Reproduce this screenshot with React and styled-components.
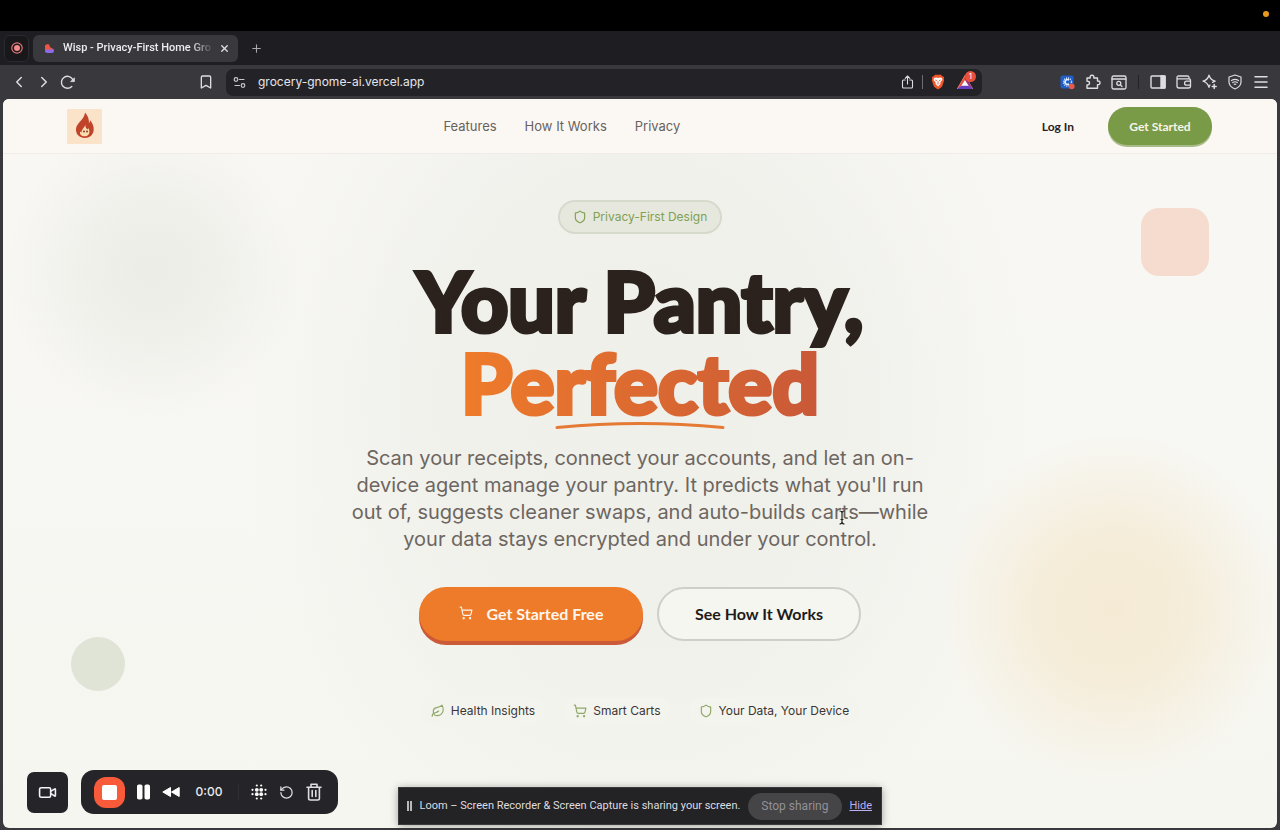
import React from "react";
import styled, { createGlobalStyle, css } from "styled-components";
import {
  ChevronLeft, ChevronRight, Bookmark, Plus, X, Shield, ShoppingCart, Leaf,
  Menu, Video, RotateCcw,
} from "lucide-react";

const display = '"Lato", "Liberation Sans", sans-serif';
const ui = '"Inter", "Liberation Sans", sans-serif';
const chrome = '"Roboto", "Liberation Sans", sans-serif';

const GlobalStyle = createGlobalStyle`
  *, *::before, *::after { box-sizing: border-box; }
  body { margin: 0; background: #39383d; font-family: ${ui}; }
  button, input { font: inherit; color: inherit; }
  svg { display: block; flex: none; }
`;

const Desktop = styled.div`
  position: relative;
  display: flex;
  flex-direction: column;
  min-height: 100vh;
  background: #39383d;
`;

const MenuBar = styled.div`
  display: flex;
  align-items: center;
  justify-content: flex-end;
  height: 31px;
  padding: 0 11px 4px;
  background: #000;
`;

const MicDot = styled.span`
  width: 6px;
  height: 6px;
  border-radius: 50%;
  background: #e89a1c;
`;

const TabStrip = styled.div`
  display: flex;
  align-items: center;
  height: 34px;
  padding: 0 4px;
  gap: 4px;
  background: #1e1d21;
`;

const PlainButton = styled.button`
  display: flex;
  align-items: center;
  justify-content: center;
  padding: 0;
  border: 0;
  background: none;
  color: #dedde2;
  cursor: pointer;
`;

const PinnedTab = styled(PlainButton)`
  width: 25px;
  height: 27px;
  border: 1px solid #2b2a2f;
  border-radius: 6px;
  background: #18171a;
`;

const Tab = styled.div`
  display: flex;
  align-items: center;
  width: 205px;
  height: 27px;
  padding: 0 8px 0 11px;
  gap: 8px;
  border-radius: 6px;
  background: #39383d;
`;

const TabTitle = styled.span`
  flex: 1;
  white-space: nowrap;
  font-family: ${chrome};
  font-size: 11px;
  font-weight: 500;
  line-height: 16px;
  color: #ececf0;
  mask-image: linear-gradient(90deg, #000 86%, transparent 102%);
`;

const NewTab = styled(PlainButton)`
  width: 28px;
  height: 27px;
  color: #a9a8ae;
`;

const Toolbar = styled.div`
  display: flex;
  align-items: center;
  height: 34px;
  padding: 0 10px;
  background: #39383d;
`;

const ToolGroup = styled.div`
  display: flex;
  align-items: center;
  gap: ${(p) => p.$gap}px;
`;

const NavTools = styled(ToolGroup)`
  width: 188px;
`;

const AddressBar = styled.div`
  display: flex;
  align-items: center;
  flex: 1;
  height: 27px;
  margin: 0 78px 0 12px;
  padding: 0 9px 0 7px;
  gap: 12px;
  border-radius: 7px;
  background: #232227;
  color: #c9c8ce;
`;

const UrlInput = styled.input`
  flex: 1;
  min-width: 0;
  padding: 0;
  border: 0;
  outline: 0;
  background: none;
  font-size: 12px;
  line-height: 16px;
  color: #e6e5ea;
`;

const Divider = styled.span`
  width: 1px;
  height: ${(p) => p.$size || 14}px;
  margin: 0 ${(p) => p.$space || 0}px;
  background: ${(p) => p.$tone || "#6d6c72"};
`;

const BadgeHost = styled.span`
  position: relative;
  display: flex;
`;

const CountBadge = styled.span`
  position: absolute;
  top: -4px;
  right: -3px;
  width: 11px;
  height: 11px;
  border-radius: 50%;
  background: #e9503b;
  color: #fff;
  font-size: 8px;
  line-height: 11px;
  text-align: center;
`;

const Page = styled.div`
  position: relative;
  display: flex;
  flex: 1;
  flex-direction: column;
  margin: 0 3px 2px;
  overflow: hidden;
  border-radius: 6px;
  background:
    radial-gradient(circle at 150px 172px, rgba(231, 232, 225, 0.7) 0, rgba(234, 235, 228, 0.6) 60px, rgba(243, 243, 238, 0) 150px),
    radial-gradient(circle at calc(100% - 164px) 510px, rgba(245, 234, 211, 0.95) 0, rgba(245, 235, 213, 0.85) 70px, rgba(247, 241, 226, 0) 175px),
    radial-gradient(ellipse 400px 480px at 50% 300px, #f0f0eb 0, #f1f1ec 50%, rgba(246, 246, 241, 0) 100%),
    linear-gradient(180deg, #f8f7f4 0, #f7f7f3 50%, #f6f6f0 100%);
`;

const SiteHeader = styled.header`
  display: flex;
  align-items: center;
  justify-content: space-between;
  height: 55px;
  padding: 0 65px 0 64px;
  border-bottom: 1px solid #f0ede9;
  background: #fbf8f4;
`;

const SiteNav = styled.nav`
  display: flex;
  gap: 28px;
`;

const NavLink = styled.a`
  font-size: 13px;
  line-height: 20px;
  color: #68625d;
  text-decoration: none;
`;

const Account = styled.div`
  display: flex;
  align-items: center;
  gap: 14px;
`;

const PillButton = styled.button`
  display: flex;
  align-items: center;
  justify-content: center;
  border: 0;
  font-family: ${display};
  font-weight: 700;
  cursor: pointer;
  ${(p) => p.$kind === "text" && css`
    padding: 8px 20px;
    background: none;
    color: #29221e;
    font-size: 12px;
  `}
  ${(p) => p.$kind === "green" && css`
    width: 104px;
    height: 38px;
    padding: 0;
    border-radius: 19px;
    background: #799b47;
    box-shadow: 0 2px 0 #a9bb88;
    color: #f8f5e9;
    font-size: 12px;
  `}
  ${(p) => p.$kind === "orange" && css`
    width: 224px;
    height: 54px;
    padding: 0 0 2px;
    gap: 14px;
    border-radius: 27px;
    background: #ed7b29;
    box-shadow: 0 4px 0 #cb5a38;
    color: #fdf6ec;
    font-size: 16px;
  `}
  ${(p) => p.$kind === "outline" && css`
    width: 204px;
    height: 54px;
    padding: 0 0 2px;
    border: 2px solid #cfcfca;
    border-radius: 27px;
    background: #f6f6f1;
    color: #1f1b19;
    font-size: 16px;
  `}
`;

const Hero = styled.main`
  display: flex;
  flex-direction: column;
  align-items: center;
  padding: 46px 24px 100px;
`;

const PrivacyBadge = styled.div`
  display: flex;
  align-items: center;
  height: 34px;
  padding: 0 13px;
  gap: 6px;
  border: 2px solid #d6dacd;
  border-radius: 17px;
  background: #e6e8de;
  color: #80a052;
  font-size: 12px;
  line-height: 16px;
`;

const Headline = styled.h1`
  position: relative;
  margin: 25px 0 0;
  font-family: ${display};
  font-size: 82px;
  font-weight: 900;
  line-height: 82px;
  text-align: center;
  color: #2b221e;
  -webkit-text-stroke: 4px #2b221e;
`;

const Accent = styled.span`
  display: block;
  width: max-content;
  margin: 0 auto;
  background: linear-gradient(90deg, #ef7b2a, #c95938);
  background-clip: text;
  color: transparent;
  -webkit-text-stroke: 4px transparent;
`;

const Swoosh = styled.svg`
  position: absolute;
  left: 50%;
  bottom: -8px;
  transform: translateX(-50%);
`;

const Lead = styled.p`
  max-width: 580px;
  margin: 22px 0 0;
  font-size: 20px;
  line-height: 27px;
  text-align: center;
  color: #6d6660;
`;

const Actions = styled.div`
  display: flex;
  flex-wrap: wrap;
  justify-content: center;
  gap: 14px;
  margin-top: 34px;
`;

const Chips = styled.ul`
  display: flex;
  flex-wrap: wrap;
  justify-content: center;
  gap: 18px;
  margin: 56px 0 0;
  padding: 0;
  list-style: none;
`;

const Chip = styled.li`
  display: flex;
  align-items: center;
  height: 28px;
  padding: 0 10px;
  gap: 6px;
  border-radius: 14px;
  background: #f4f4ef;
  color: #3b3633;
  font-size: 12px;
  line-height: 16px;
`;

const Floater = styled.span`
  position: absolute;
  ${(p) => p.$shape === "square" ? css`
    top: 109px;
    right: 68px;
    width: 68px;
    height: 68px;
    border-radius: 18px;
    background: #f6dccf;
  ` : css`
    top: 538px;
    left: 68px;
    width: 54px;
    height: 54px;
    border-radius: 50%;
    background: #e0e4d6;
  `}
`;

const TextCursor = styled.svg`
  position: absolute;
  top: 411px;
  left: calc(50% + 198px);
`;

const RecorderDock = styled.div`
  position: absolute;
  bottom: 16px;
  left: 27px;
  display: flex;
  align-items: center;
  gap: 13px;
  color: #fff;
`;

const CameraButton = styled(PlainButton)`
  width: 41px;
  height: 41px;
  border-radius: 7px;
  background: #252428;
  color: #f4f4f6;
`;

const Recorder = styled.div`
  display: flex;
  align-items: center;
  height: 44px;
  padding: 0 16px 0 13px;
  border-radius: 13px;
  background: #252428;
  gap: 12px;
`;

const StopButton = styled(PlainButton)`
  width: 31px;
  height: 31px;
  border-radius: 12px;
  background: #f95a3a;
`;

const StopMark = styled.span`
  width: 15px;
  height: 15px;
  border-radius: 2px;
  background: #fff;
`;

const Timer = styled.span`
  width: 34px;
  font-size: 12px;
  font-weight: 500;
  line-height: 16px;
  text-align: center;
  color: #ececee;
`;

const ShareBar = styled.div`
  position: absolute;
  bottom: 5px;
  left: 50%;
  display: flex;
  align-items: center;
  justify-content: space-between;
  width: 484px;
  height: 38px;
  padding: 0 9px 0 8px;
  transform: translateX(-50%);
  border: 1px solid #3a393c;
  background: #232224;
  box-shadow: 0 1px 8px rgba(0, 0, 0, 0.35);
  color: #dddde0;
  font-family: ${chrome};
  font-size: 11px;
  line-height: 16px;
  white-space: nowrap;
`;

const ShareMark = styled.span`
  width: 5px;
  height: 10px;
  border: solid #b9b9bd;
  border-width: 0 2px;
`;

const StopSharing = styled.button`
  width: 94px;
  height: 27px;
  padding: 0;
  border: 0;
  border-radius: 14px;
  background: #454447;
  color: #929196;
  font-size: 12px;
`;

const HideLink = styled.a`
  color: #bcaef0;
  text-decoration: underline;
`;

const line = { fill: "none", stroke: "currentColor", strokeLinecap: "round", strokeLinejoin: "round" };

const RecordIcon = () => (
  <svg width="12" height="12" viewBox="0 0 12 12">
    <circle cx="6" cy="6" r="5.2" fill="none" stroke="#df7479" strokeWidth="1.2" />
    <circle cx="6" cy="6" r="3" fill="#f28b8c" />
  </svg>
);

const FaviconIcon = () => (
  <svg width="11" height="11" viewBox="0 0 11 11">
    <path d="M1 5.5 H8 Q10 5.5 10 7.8 Q10 10 8 10 H3 Q1 10 1 8Z" fill="#8b6be8" />
    <path d="M1 2.5 Q2 1 4 1 Q5.5 1 6 4 L9.5 6.5 H1Z" fill="#ef5540" />
  </svg>
);

const ReloadIcon = () => (
  <svg width="16" height="16" viewBox="0 0 16 16" {...line} strokeWidth="1.4">
    <path d="M11.8 12.4 A6 6 0 1 1 13 6" />
    <path d="M14.4 4.2 V7.6 H11Z" fill="currentColor" strokeWidth=".8" />
  </svg>
);

const TuneIcon = () => (
  <svg width="13" height="13" viewBox="0 0 13 13" {...line} strokeWidth="1.2">
    <circle cx="3" cy="3.5" r="1.8" /><path d="M6.5 3.5 H11" />
    <circle cx="10" cy="9.5" r="1.8" /><path d="M2 9.5 H6.5" />
  </svg>
);

const ShareIcon = () => (
  <svg width="13" height="14" viewBox="0 0 13 14" {...line} strokeWidth="1.1">
    <path d="M4.2 5 H2.5 Q1.5 5 1.5 6 V12 Q1.5 13 2.5 13 H10.5 Q11.5 13 11.5 12 V6 Q11.5 5 10.5 5 H8.8" />
    <path d="M6.5 9 V1.2 M4.2 3.3 L6.5 1 L8.8 3.3" />
  </svg>
);

const LionIcon = () => (
  <svg width="14" height="16" viewBox="0 0 14 16">
    <path d="M4 .8 H10 L11.3 2.2 L13.2 3 L12.8 5 L13.2 6.3 L11.3 12 Q10.5 13.5 7 15.5 Q3.5 13.5 2.7 12 L.8 6.3 L1.2 5 L.8 3 L2.7 2.2Z" fill="#f1562b" />
    <path d="M3 4 L5.5 3.6 L7 4 L8.5 3.6 L11 4 L11.4 6 L9.3 8.4 L9.5 10 L7 12.5 L4.5 10 L4.7 8.4 L2.6 6Z" fill="#fff" />
    <path d="M4.2 6 L6 6.6 M9.8 6 L8 6.6 M7 7 V9 M5.8 9.4 L7 10.2 L8.2 9.4" stroke="#f1562b" strokeWidth=".8" fill="none" />
  </svg>
);

const TriangleIcon = () => (
  <svg width="16" height="14" viewBox="0 0 16 14">
    <path d="M8 0 L16 14 H0Z" fill="#fff" />
    <path d="M8 0 V5 L4.2 11 L0 14Z" fill="#f0503a" />
    <path d="M8 0 L16 14 L11.8 11 L8 5Z" fill="#9b2f7c" />
    <path d="M0 14 L4.2 10.7 H11.8 L16 14Z" fill="#6a3cc0" />
  </svg>
);

const ExtensionIcon = () => (
  <svg width="15" height="15" viewBox="0 0 15 15">
    <rect x=".5" y=".5" width="13" height="13" rx="2" fill="#1e5fcc" />
    <circle cx="7.5" cy="7" r="4" fill="none" stroke="#e7f0ff" strokeWidth="1.4" strokeDasharray="1 1.1" />
    <path d="M9 5.2 A2.4 2.4 0 1 0 9 8.8" fill="none" stroke="#e7f0ff" strokeWidth="1.6" />
    <circle cx="11.7" cy="11.3" r="2.9" fill="#e8594a" />
  </svg>
);

const PuzzleIcon = () => (
  <svg width="16" height="16" viewBox="0 0 16 16" {...line} strokeWidth="1.4">
    <path d="M2 4 H5.2 C4.8 2.2 5.6 1.2 7 1.2 C8.400 1.2 9.2 2.2 8.8 4 H12.500 V7 C14.200 6.700 15 7.600 15 8.800 C15 10 14.200 10.900 12.500 10.600 V14.300 H2 V11 C3.700 11.200 4.500 10.300 4.500 9.100 C4.500 7.900 3.700 7 2 7.200Z" />
  </svg>
);

const TabSearchIcon = () => (
  <svg width="16" height="15" viewBox="0 0 16 15" {...line} strokeWidth="1.3">
    <rect x="1" y="1" width="14" height="13" rx="1.5" /><path d="M1 4 H15" />
    <circle cx="7.8" cy="8.3" r="2" /><path d="M9.4 9.9 L11 11.5" />
  </svg>
);

const SidePanelIcon = () => (
  <svg width="16" height="14" viewBox="0 0 16 14" {...line} strokeWidth="1.4">
    <rect x="1" y="1" width="14" height="12" rx="1" /><path d="M11 1 H15 V13 H11Z" fill="currentColor" />
  </svg>
);

const WalletIcon = () => (
  <svg width="16" height="14" viewBox="0 0 16 14" {...line} strokeWidth="1.3">
    <path d="M13 3.500 V2.500 Q13 1 11.500 1 H2.500 Q1 1 1 2.500 V11 Q1 13 3 13 H12.500 Q14.500 13 14.500 11 V5.500 Q14.500 3.800 13 3.800 H1.500" />
    <path d="M14.500 6.200 H10.500 Q8.600 6.200 8.600 8.200 Q8.600 10.200 10.500 10.200 H14.500" />
  </svg>
);

const SparkIcon = () => (
  <svg width="16" height="16" viewBox="0 0 16 16" {...line} strokeWidth="1.3">
    <path d="M10.600 8.400 Q12 7.600 13.200 7.200 Q8.600 6 7 1.200 Q5.600 6 1 7.200 Q5.600 8.600 7 13.400 Q7.300 12 8 11" />
    <path d="M12.2 10.500 V14.500 M10.200 12.500 H14.200" strokeWidth="1.500" />
  </svg>
);

const VpnIcon = () => (
  <svg width="14" height="16" viewBox="0 0 14 16" {...line} strokeWidth="1.2">
    <path d="M7 1 L13 3 V8 Q13 12.500 7 15 Q1 12.500 1 8 V3Z" />
    <path d="M3.500 6.500 Q7 4.300 10.500 6.500 M4.700 8.500 Q7 7 9.300 8.500 M6.200 10.300 Q7 9.800 7.800 10.300" />
  </svg>
);

const FlameLogo = () => (
  <svg width="35" height="35" viewBox="0 0 35 35" role="img" aria-label="Wisp">
    <rect width="35" height="35" rx="1" fill="#fbe3c9" />
    <path d="M18 3.500 C21 7 22 10 22 14 C23 13 23.200 12 22.800 10.800 C25.500 14 27 17.500 26.700 21 C26.300 26 22.500 29 17.800 29 C12.500 29 9 25.500 9 20.800 C9 16.500 11.500 14.500 14 11.500 C16.500 8.700 17.700 6.500 18 3.500Z" fill="#bf4429" />
    <path d="M18.500 15.500 C18 18 19 19 20.500 20.500 C21 20 21.200 19.500 21.300 19 C23.300 22 22.800 27 18.300 27.300 C14.500 27.500 12.500 25.500 13 22.500 L14.500 23.500 C14.700 20 17.500 18.500 18.500 15.500Z" fill="#fbdcae" />
    <circle cx="17" cy="22.500" r=".9" fill="#7c2d1e" /><circle cx="20" cy="22.500" r=".9" fill="#7c2d1e" />
  </svg>
);

const PauseIcon = () => (
  <svg width="13" height="16" viewBox="0 0 13 16" fill="#fff">
    <rect x="0" y=".5" width="5.500" height="15" rx="1.800" /><rect x="7.500" y=".5" width="5.500" height="15" rx="1.800" />
  </svg>
);

const RewindIcon = () => (
  <svg width="18" height="12" viewBox="0 0 18 12" fill="#fff">
    <path d="M8.500 1.500 V10.500 L.8 6Z M17.200 1.500 V10.500 L9.500 6Z" stroke="#fff" strokeLinejoin="round" />
  </svg>
);

const dotSteps = [1.5, 5.8, 10.2, 14.5];
const BlurDotsIcon = () => (
  <svg width="16" height="16" viewBox="0 0 16 16" fill="#fff">
    {dotSteps.map((y, i) => dotSteps.map((x, j) => {
      const rim = (n) => n === 0 || n === 3;
      if (rim(i) && rim(j)) return null;
      return <circle key={`${x}-${y}`} cx={x} cy={y} r={rim(i) || rim(j) ? 1.1 : 1.9} />;
    }))}
  </svg>
);

const TrashIcon = () => (
  <svg width="16" height="18" viewBox="0 0 16 18" {...line} strokeWidth="1.600">
    <path d="M1 4.200 H15 M5 4 V1.200 H11 V4 M2.600 4.200 V15.300 Q2.600 17 4.300 17 H11.700 Q13.400 17 13.400 15.300 V4.200 M6.200 7.500 V13.500 M9.800 7.500 V13.500" />
  </svg>
);

const chips = [
  { icon: Leaf, text: "Health Insights" },
  { icon: ShoppingCart, text: "Smart Carts" },
  { icon: Shield, text: "Your Data, Your Device" },
];

export default function App() {
  return (
    <Desktop>
      <GlobalStyle />
      <MenuBar><MicDot /></MenuBar>
      <TabStrip>
        <PinnedTab aria-label="Recording tab"><RecordIcon /></PinnedTab>
        <Tab>
          <FaviconIcon />
          <TabTitle>Wisp - Privacy-First Home Gro</TabTitle>
          <PlainButton aria-label="Close tab"><X size={11} strokeWidth={3} /></PlainButton>
        </Tab>
        <NewTab aria-label="New tab"><Plus size={13} strokeWidth={2} /></NewTab>
      </TabStrip>
      <Toolbar>
        <NavTools $gap={7}>
          <PlainButton aria-label="Back"><ChevronLeft size={18} strokeWidth={2} /></PlainButton>
          <PlainButton aria-label="Forward"><ChevronRight size={18} strokeWidth={2} /></PlainButton>
          <PlainButton aria-label="Reload"><ReloadIcon /></PlainButton>
        </NavTools>
        <PlainButton aria-label="Bookmark"><Bookmark size={16} strokeWidth={2} /></PlainButton>
        <AddressBar>
          <TuneIcon />
          <UrlInput aria-label="Address" defaultValue="grocery-gnome-ai.vercel.app" />
          <ToolGroup $gap={8}>
            <PlainButton aria-label="Share"><ShareIcon /></PlainButton>
            <Divider />
            <PlainButton aria-label="Shields"><LionIcon /></PlainButton>
          </ToolGroup>
          <PlainButton aria-label="Rewards">
            <BadgeHost><TriangleIcon /><CountBadge>1</CountBadge></BadgeHost>
          </PlainButton>
        </AddressBar>
        <ToolGroup $gap={10}>
          <PlainButton aria-label="Extension"><ExtensionIcon /></PlainButton>
          <PlainButton aria-label="Extensions"><PuzzleIcon /></PlainButton>
          <PlainButton aria-label="Search tabs"><TabSearchIcon /></PlainButton>
          <Divider $tone="#242328" $space={1} />
          <PlainButton aria-label="Side panel"><SidePanelIcon /></PlainButton>
          <PlainButton aria-label="Wallet"><WalletIcon /></PlainButton>
          <PlainButton aria-label="Assistant"><SparkIcon /></PlainButton>
          <PlainButton aria-label="VPN"><VpnIcon /></PlainButton>
          <PlainButton aria-label="Menu"><Menu size={18} strokeWidth={2} /></PlainButton>
        </ToolGroup>
      </Toolbar>
      <Page>
        <SiteHeader>
          <FlameLogo />
          <SiteNav>
            <NavLink href="#features">Features</NavLink>
            <NavLink href="#how">How It Works</NavLink>
            <NavLink href="#privacy">Privacy</NavLink>
          </SiteNav>
          <Account>
            <PillButton $kind="text">Log In</PillButton>
            <PillButton $kind="green">Get Started</PillButton>
          </Account>
        </SiteHeader>
        <Hero>
          <PrivacyBadge><Shield size={14} />Privacy-First Design</PrivacyBadge>
          <Headline>
            Your Pantry,
            <Accent>Perfected</Accent>
            <Swoosh width="170" height="12" viewBox="0 0 170 12">
              <path d="M2 8.500 Q85 .5 168 8.500" fill="none" stroke="#e57a35" strokeWidth="3" strokeLinecap="round" />
            </Swoosh>
          </Headline>
          <Lead>
            Scan your receipts, connect your accounts, and let an on-device agent manage your pantry. It predicts
            what you'll run out of, suggests cleaner swaps, and auto-builds carts—while your data stays encrypted and
            under your control.
          </Lead>
          <Actions>
            <PillButton $kind="orange"><ShoppingCart size={14} />Get Started Free</PillButton>
            <PillButton $kind="outline">See How It Works</PillButton>
          </Actions>
          <Chips>
            {chips.map(({ icon: Icon, text }) => (
              <Chip key={text}><Icon size={14} color="#8fa868" />{text}</Chip>
            ))}
          </Chips>
        </Hero>
        <Floater $shape="square" />
        <Floater $shape="circle" />
        <TextCursor width="8" height="15" viewBox="0 0 8 15">
          <path d="M1.500 1 Q4 1 4 3 Q4 1 6.500 1 M4 3 V12 M1.500 14 Q4 14 4 12 Q4 14 6.500 14 M2.500 9.500 H5.500" fill="none" stroke="#222" strokeWidth="1.200" />
        </TextCursor>
      </Page>
      <RecorderDock>
        <CameraButton aria-label="Camera"><Video size={19} strokeWidth={2} /></CameraButton>
        <Recorder>
          <StopButton aria-label="Stop"><StopMark /></StopButton>
          <PlainButton aria-label="Pause"><PauseIcon /></PlainButton>
          <PlainButton aria-label="Rewind"><RewindIcon /></PlainButton>
          <Timer>0:00</Timer>
          <Divider $tone="#302f33" $size={16} />
          <PlainButton aria-label="Blur"><BlurDotsIcon /></PlainButton>
          <PlainButton aria-label="Restart"><RotateCcw size={15} /></PlainButton>
          <PlainButton aria-label="Delete"><TrashIcon /></PlainButton>
        </Recorder>
      </RecorderDock>
      <ShareBar>
        <ShareMark />
        <span>Loom – Screen Recorder &amp; Screen Capture is sharing your screen.</span>
        <StopSharing>Stop sharing</StopSharing>
        <HideLink href="#hide">Hide</HideLink>
      </ShareBar>
    </Desktop>
  );
}
